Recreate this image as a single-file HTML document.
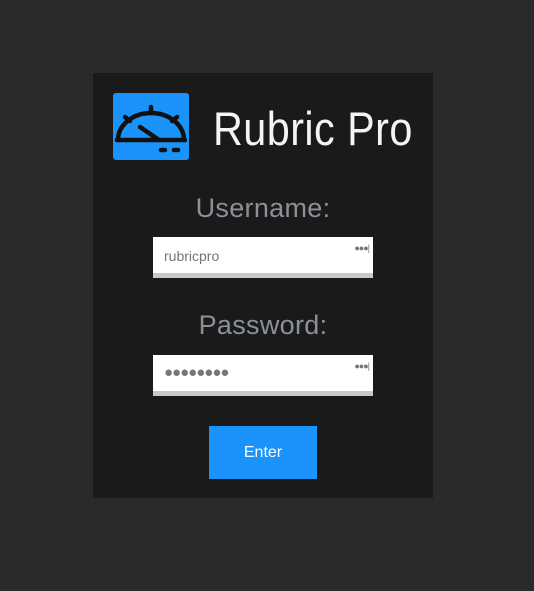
<!DOCTYPE html>
<html><head><style>
html,body{margin:0;padding:0}
body{width:534px;height:591px;background:#2a2a2a;position:relative;overflow:hidden;font-family:"Liberation Sans",sans-serif}
.panel{position:absolute;left:93px;top:73px;width:340px;height:425px;background:#1a1a1a}
.logo{position:absolute;left:113px;top:93px}
.title{position:absolute;left:213px;top:101px;font-size:47px;color:#f4f4f4;font-weight:300;letter-spacing:0.5px;transform:scaleX(0.88);transform-origin:left}
.lbl{position:absolute;left:93px;width:340px;text-align:center;color:#8b9099;font-size:27px;letter-spacing:0.3px}
.inp{position:absolute;left:153px;width:220px;height:36px;background:#fff;border-bottom:5px solid #c8c8c8}
.inp .t{position:absolute;left:11px;top:11px;font-size:14px;color:#777}
.inp .k{position:absolute;right:4px;top:6px;font-size:9px;color:#777;letter-spacing:-1px}
.btn{position:absolute;left:209px;top:426px;width:108px;height:53px;background:#1a94fb;color:#fff;font-size:16px;text-align:center;line-height:53px}
</style></head><body>
<div class="panel"></div>
<svg class="logo" width="77" height="68" viewBox="0 0 77 68">
<rect x="0" y="0" width="76" height="67" rx="3" fill="#1a94fb"/>
<g stroke="#111" stroke-width="4.5" fill="none" stroke-linecap="round">
<path d="M5 47 A33 27 0 0 1 71 47"/>
<line x1="4" y1="47" x2="72" y2="47"/>
<line x1="38" y1="14" x2="38" y2="20"/>
<line x1="12" y1="24" x2="17" y2="28"/>
<line x1="64" y1="24" x2="59" y2="28"/>
<line x1="27" y1="34" x2="46" y2="47"/>
<line x1="48" y1="57" x2="52" y2="57"/>
<line x1="61" y1="57" x2="65" y2="57"/>
</g>
</svg>
<div class="title">Rubric Pro</div>
<div class="lbl" style="top:193px">Username:</div>
<div class="inp" style="top:237px"><span class="t">rubricpro</span><span class="k">●●●|</span></div>
<div class="lbl" style="top:310px">Password:</div>
<div class="inp" style="top:355px"><span class="t" style="font-size:15px;top:9px;letter-spacing:-1px">●●●●●●●●</span><span class="k">●●●|</span></div>
<div class="btn">Enter</div>
</body></html>
